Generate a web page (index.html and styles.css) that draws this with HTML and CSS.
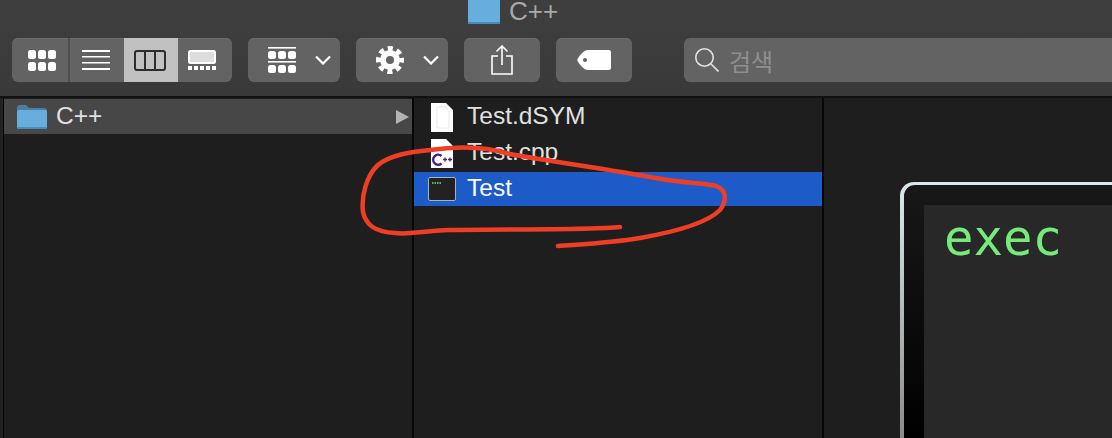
FILE: index.html
```html
<!DOCTYPE html>
<html>
<head>
	<title>C++</title>
	<link rel="stylesheet" href="styles.css">
</head>
<body>
<div class="window">
	<div class="toolbar">
		<div class="title">
			<svg class="title-folder" width="32" height="24" viewBox="0 0 32 24"><rect width="32" height="24" fill="#65aedd"/><rect y="22" width="32" height="2" fill="#4a8cb8"/></svg>
			<span>C++</span>
		</div>
		<div class="tools">
			<div class="btn views">
				<div class="view view-first">
					<svg width="28" height="21" viewBox="0 0 28 21" fill="#fff"><rect x="0" y="0" width="8" height="9" rx="2.5"/><rect x="10" y="0" width="8" height="9" rx="2.5"/><rect x="20" y="0" width="8" height="9" rx="2.5"/><rect x="0" y="12" width="8" height="9" rx="2.5"/><rect x="10" y="12" width="8" height="9" rx="2.5"/><rect x="20" y="12" width="8" height="9" rx="2.5"/></svg>
				</div>
				<div class="view view-list">
					<svg width="28" height="21" viewBox="0 0 28 21" fill="#fff"><rect y="0" width="28" height="2"/><rect y="6" width="28" height="1.5"/><rect y="12" width="28" height="1.5"/><rect y="18" width="28" height="2"/></svg>
				</div>
				<div class="view view-on">
					<svg width="32" height="21" viewBox="0 0 32 21" fill="none" stroke="#2c2c2c" stroke-width="2"><rect x="1" y="1" width="30" height="19" rx="2"/><path d="M11 1v19M21 1v19"/></svg>
				</div>
				<div class="view view-flow">
					<svg width="28" height="20" viewBox="0 0 28 20"><rect x="1" y="1" width="26" height="12" rx="1.5" fill="#ddd" stroke="#fff" stroke-width="2"/><g fill="#fff"><rect x="0" y="16" width="4" height="4"/><rect x="6" y="16" width="4" height="4"/><rect x="12" y="16" width="4" height="4"/><rect x="18" y="16" width="4" height="4"/><rect x="24" y="16" width="4" height="4"/></g></svg>
				</div>
			</div>
			<div class="btn btn-menu">
				<svg width="28" height="26" viewBox="0 0 28 26" fill="#fff"><rect y="0" width="28" height="1.6"/><rect x="0" y="4" width="8" height="8" rx="2.5"/><rect x="10" y="4" width="8" height="8" rx="2.5"/><rect x="20" y="4" width="8" height="8" rx="2.5"/><rect y="14" width="28" height="1.6"/><rect x="0" y="18" width="8" height="8" rx="2.5"/><rect x="10" y="18" width="8" height="8" rx="2.5"/><rect x="20" y="18" width="8" height="8" rx="2.5"/></svg>
				<svg class="chev" width="16" height="10" viewBox="0 0 16 10" fill="none" stroke="#fff" stroke-width="2.2"><path d="M1 1.5l7 7 7-7"/></svg>
			</div>
			<div class="btn btn-menu">
				<svg width="28" height="28" viewBox="0 0 28 28" fill="none" stroke="#fff"><circle cx="14" cy="14" r="11.500" stroke-width="5" stroke-dasharray="5 4.030" stroke-dashoffset="2.500"/><circle cx="14" cy="14" r="7" stroke-width="6"/></svg>
				<svg class="chev" width="16" height="10" viewBox="0 0 16 10" fill="none" stroke="#fff" stroke-width="2.2"><path d="M1 1.5l7 7 7-7"/></svg>
			</div>
			<div class="btn btn-share">
				<svg width="22" height="30" viewBox="0 0 22 30" fill="none" stroke="#fff" stroke-width="1.6"><path d="M7 11H1v18h20V11h-6"/><path d="M11 20V1M5.500 6.500L11 1l5.500 5.500"/></svg>
			</div>
			<div class="btn btn-tag">
				<svg width="34" height="20" viewBox="0 0 34 20"><path fill="#fff" fill-rule="evenodd" d="M11 0h21a2 2 0 0 1 2 2v16a2 2 0 0 1-2 2H11C7 20 3 15 .8 11.500a3 3 0 0 1 0-3C3 5 7 0 11 0zM8 8a2 2 0 1 0 0 4 2 2 0 0 0 0-4z"/></svg>
			</div>
			<div class="search">
				<svg width="24" height="24" viewBox="0 0 24 24" fill="none" stroke="#e4e4e4" stroke-width="1.600"><circle cx="9.500" cy="9.500" r="8.700"/><path d="M16 16l7.500 7.500"/></svg>
				<span>검색</span>
			</div>
		</div>
	</div>
	<div class="browser">
		<div class="edge"></div>
		<div class="col col-first">
			<div class="row row-parent">
				<svg width="30" height="24" viewBox="0 0 30 24"><path fill="#4c7f9e" d="M0 3a3 3 0 0 1 3-3h6l3 3h15a3 3 0 0 1 3 3v3H0z"/><rect y="5" width="30" height="19" rx="1.500" fill="#65aedd"/><rect y="22" width="30" height="2" rx="1" fill="#4a8cb8"/></svg>
				<span class="name">C++</span>
				<svg class="arrow" width="14" height="16" viewBox="0 0 14 16"><path fill="#b4b4b4" d="M0 1l13 7-13 7z"/></svg>
			</div>
		</div>
		<div class="col col-files">
			<div class="row">
				<svg class="file" width="22" height="29" viewBox="0 0 22 29"><path fill="#fff" d="M0 0h15l7 7v22H0z"/><path fill="none" stroke="#e8e8e8" d="M6 4h8l4 4v17H6z"/></svg>
				<span class="name">Test.dSYM</span>
			</div>
			<div class="row">
				<svg class="file" width="22" height="29" viewBox="0 0 22 29"><path fill="#fff" d="M0 0h15l7 7v22H0z"/><path fill="none" stroke="#43218f" stroke-width="2.500" d="M10.500 17a5 5 0 1 0 0 7.500"/><path fill="none" stroke="#43218f" stroke-width="1.300" d="M12 20.500h4M14 18.500v4M17 20.500h4M19 18.500v4"/></svg>
				<span class="name">Test.cpp</span>
			</div>
			<div class="row row-selected">
				<svg class="exec" width="28" height="24" viewBox="0 0 28 24"><rect x=".5" y=".5" width="27" height="23" rx="1.500" fill="#222" stroke="#a9b3ba"/><path stroke="#5cb85c" stroke-dasharray="1.500 1" stroke-width="2" d="M4 6h10"/></svg>
				<span class="name">Test</span>
			</div>
		</div>
		<div class="preview">
			<div class="icon-frame">
				<div class="icon-well">
					<div class="icon-screen">exec</div>
				</div>
			</div>
		</div>
	</div>
	<svg class="scribble" width="1112" height="438" viewBox="0 0 1112 438" fill="none" stroke="#ee3f24" stroke-width="4.500" stroke-linecap="round" stroke-linejoin="round"><path d="M620 227C590 230 520 229 450 230C420 231 410 235 395 233C375 232 366 225 363 212C361 195 367 175 378 165C390 155 410 152 430 150C450 147 480 145 510 154C540 160 590 166 650 177C680 183 705 183 716 186C727 190 727 201 720 210C708 222 680 231 640 238C610 243 585 244 558 246"/></svg>
</div>
</body>
</html>
```

FILE: styles.css
```css
html, body {
	margin: 0;
	height: 100%;
	overflow: hidden;
	background: #1e1e1e;
}

body {
	font-family: "Liberation Sans", "Noto Sans CJK KR", sans-serif;
}

.window {
	position: relative;
	display: flex;
	flex-direction: column;
	height: 438px;
}

.toolbar {
	height: 96px;
	flex: none;
	background: linear-gradient(#3f3f3f, #393939);
	border-bottom: 2px solid #111;
}

.title {
	height: 24px;
	margin-left: 468px;
	display: flex;
	gap: 9px;
	color: #a9a9a9;
	font-size: 26px;
	line-height: 23px;
}

.tools {
	display: flex;
	margin: 14px 0 0 12px;
	height: 44px;
}

.btn {
	height: 44px;
	background: #636363;
	border-radius: 6px;
	display: flex;
	align-items: center;
	justify-content: center;
	box-shadow: inset 0 1px 0 #6d6d6d;
}

.views {
	width: 220px;
	overflow: hidden;
	margin-right: 16px;
}

.view {
	width: 54px;
	height: 44px;
	display: flex;
	align-items: center;
	justify-content: center;
	flex: none;
	box-sizing: border-box;
}

.view-first {
	width: 58px;
	border-right: 2px solid #4e4e4e;
	padding-left: 4px;
}

.view-list {
	padding-right: 2px;
}

.view-on {
	background: #c1c1c1;
	padding-right: 2px;
}

.view-flow {
	padding-right: 6px;
}

.btn-menu {
	width: 92px;
	margin-right: 16px;
	justify-content: flex-start;
	padding-left: 20px;
	box-sizing: border-box;
}

.chev {
	margin-left: 19px;
}

.btn-share {
	width: 76px;
	margin-right: 16px;
}

.btn-tag {
	width: 76px;
	margin-right: 52px;
}

.search {
	flex: 1;
	height: 44px;
	background: #636363;
	border-radius: 6px 0 0 6px;
	display: flex;
	align-items: center;
	gap: 10px;
	padding-left: 11px;
	color: #8f8f8f;
	font-size: 24px;
	font-family: "Noto Sans CJK KR", sans-serif;
}

.browser {
	flex: 1;
	display: flex;
	min-height: 0;
}

.edge {
	width: 3px;
	background: #222;
	border-right: 1px solid #060606;
	flex: none;
}

.col {
	background: #1e1e1e;
	border-right: 2px solid #060606;
	flex: none;
	box-sizing: border-box;
}

.col-first {
	width: 410px;
	padding-top: 1px;
}

.col-files {
	width: 410px;
	padding-top: 2px;
}

.row {
	height: 34px;
	margin-bottom: 2px;
	display: flex;
	align-items: center;
	color: #e0e0e0;
	font-size: 24.5px;
}

.name {
	padding-bottom: 2px;
}

.row-parent {
	height: 35px;
	background: #474747;
	padding-left: 13px;
}

.row-parent .name {
	margin-left: 9px;
	flex: 1;
}

.arrow {
	margin-right: 2px;
}

.file {
	margin: 0 14px 0 17px;
}

.exec {
	margin: 0 11px 0 14px;
}

.row-selected {
	background: #1d5bc9;
	color: #fff;
}

.preview {
	flex: 1;
	padding: 84px 0 0 76px;
	overflow: hidden;
}

.icon-frame {
	height: 100%;
	margin-right: -40px;
	box-sizing: border-box;
	padding: 3px 0 0 4px;
	border-radius: 14px 0 0 0;
	background: linear-gradient(#dce9ec, #8a8a8a);
}

.icon-well {
	height: 100%;
	box-sizing: border-box;
	padding: 20px 0 0 20px;
	border-radius: 11px 0 0 0;
	background: linear-gradient(#181818, #000);
}

.icon-screen {
	height: 100%;
	background: #282828;
	padding: 3px 0 0 20px;
	color: #78ea7a;
	font-family: "DejaVu Sans Mono", monospace;
	font-size: 49px;
	line-height: 62px;
}

.scribble {
	position: absolute;
	left: 0;
	top: 0;
	pointer-events: none;
}
```
